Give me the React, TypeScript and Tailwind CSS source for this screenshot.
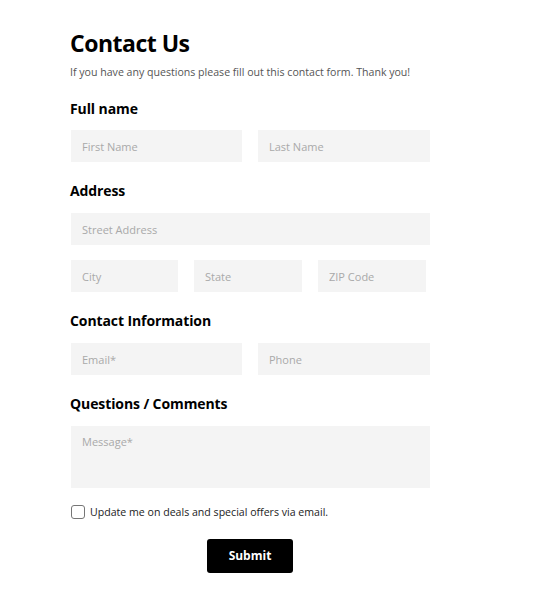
export default function App() {
  const font = { fontFamily: '"Open Sans", "Noto Sans", sans-serif' };
  const input =
    "h-[32px] bg-[#f4f4f4] px-[11px] text-[11px] text-[#333] placeholder:text-[#a9a9a9] outline-none";
  const label = "text-[14px] font-bold leading-[20px] text-black tracking-[-0.1px]";

  return (
    <div className="min-h-screen bg-white" style={font}>
      <form className="ml-[70px] w-[360px] pt-[28px]">
        <h1 className="text-[23px] font-bold leading-[30px] tracking-[-0.5px] text-black">
          Contact Us
        </h1>
        <p className="mt-[6px] text-[10.6px] leading-[16px] text-[#555]">
          If you have any questions please fill out this contact form. Thank you!
        </p>

        {/* Full name */}
        <h2 className={`${label} mt-[19px]`}>Full name</h2>
        <div className="mt-[11px] flex gap-[16px] pl-[1px]">
          <input className={`${input} w-[171px]`} placeholder="First Name" />
          <input className={`${input} w-[172px]`} placeholder="Last Name" />
        </div>

        {/* Address */}
        <h2 className={`${label} mt-[19px]`}>Address</h2>
        <div className="mt-[12px] pl-[1px]">
          <input className={`${input} w-[359px]`} placeholder="Street Address" />
        </div>
        <div className="mt-[15px] flex gap-[16px] pl-[1px]">
          <input className={`${input} w-[107px]`} placeholder="City" />
          <input className={`${input} w-[108px]`} placeholder="State" />
          <input className={`${input} w-[108px]`} placeholder="ZIP Code" />
        </div>

        {/* Contact information */}
        <h2 className={`${label} mt-[19px]`}>Contact Information</h2>
        <div className="mt-[12px] flex gap-[16px] pl-[1px]">
          <input className={`${input} w-[171px]`} placeholder="Email*" />
          <input className={`${input} w-[172px]`} placeholder="Phone" />
        </div>

        {/* Questions */}
        <h2 className={`${label} mt-[19px]`}>Questions / Comments</h2>
        <div className="mt-[12px] pl-[1px]">
          <textarea
            className="block h-[62px] w-[359px] resize-none bg-[#f4f4f4] px-[11px] py-[8px] text-[11px] leading-[16px] text-[#333] placeholder:text-[#a9a9a9] outline-none"
            placeholder="Message*"
          />
        </div>

        <label className="mt-[16px] flex items-center gap-[5px] pl-[1px]">
          <span className="h-[14px] w-[14px] rounded-[3px] border border-[#767676] bg-white" />
          <span className="text-[10.6px] leading-[16px] text-[#222]">
            Update me on deals and special offers via email.
          </span>
        </label>

        <div className="mt-[19px] flex justify-center">
          <button
            type="button"
            className="h-[34px] w-[86px] rounded-[3px] bg-black text-[12px] font-bold text-white"
          >
            Submit
          </button>
        </div>
      </form>
    </div>
  );
}
